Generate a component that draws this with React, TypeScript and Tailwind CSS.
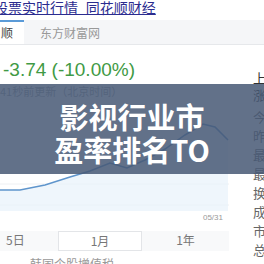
import * as React from 'react';

const chartPts: [number, number][] = [
  [0, 91], [20, 91], [45, 86], [70, 78], [90, 72], [110, 64], [127, 69],
  [145, 61], [165, 50], [185, 36], [203, 25], [215, 28], [228, 41],
];

const sideItems = ['今开', '昨收', '最高', '最低', '换手', '成交', '市值', '总市'];

function PriceChart() {
  const line = chartPts.map(([x, y], i) => `${i ? 'L' : 'M'}${x} ${y}`).join(' ');
  return (
    <svg width="229" height="112" viewBox="0 0 229 112" className="block">
      <line x1="0" y1="85" x2="229" y2="85" stroke="#eef0f3" strokeWidth="1" />
      <line x1="0" y1="106" x2="229" y2="106" stroke="#eef0f3" strokeWidth="1" />
      <path d={`${line} L228 112 L0 112 Z`} fill="#e8f2fb" opacity="0.7" />
      <path d={line} fill="none" stroke="#5f95cc" strokeWidth="1.5" />
    </svg>
  );
}

export default function App() {
  return (
    <div className="relative w-[264px] h-[264px] overflow-hidden bg-white font-['Noto_Sans_CJK_SC',sans-serif]">
      {/* page title link */}
      <div className="h-[20px] -ml-[6px] -mt-[2px] whitespace-nowrap text-[14px] leading-[18px] text-[#2b2c8f] underline">
        股票实时行情_同花顺财经
      </div>

      {/* source tabs */}
      <div className="mt-[2px] flex h-[25px] items-stretch border-b border-[#e6e8eb] bg-[#f5f6f8]">
        <div className="w-[24px] border-t-2 border-[#5b9bd8] bg-white pl-[1px] pt-[4px] text-[12px] leading-[14px] text-[#444]">顺</div>
        <div className="pl-[16px] pt-[6px] text-[12px] leading-[14px] text-[#999]">东方财富网</div>
      </div>

      <div className="flex">
        <div className="w-[248px]">
          <div className="mt-[13px] h-[23px] pl-[3px] font-['Liberation_Sans',sans-serif] text-[19px] leading-[23px] text-[#3f9a45]">
            -3.74 (-10.00%)
          </div>
          <div className="mt-[2px] h-[16px] whitespace-nowrap text-[11px] leading-[16px] text-[#a0a4aa]">41秒前更新（北京时间）</div>
          <PriceChart />
          <div className="flex h-[14px] w-[229px] justify-end pr-[6px] font-['Liberation_Sans',sans-serif] text-[8px] leading-[14px] text-[#999]">05/31</div>
          <div className="mt-[6px] flex h-[20px] w-[229px] items-stretch bg-[#f8f9fa] text-[12px] leading-[18px] text-[#777]">
            <div className="w-[58px] pl-[6px]">5日</div>
            <div className="flex w-[84px] justify-center border border-[#e3e5e8] bg-white">1月</div>
            <div className="flex flex-1 justify-center">1年</div>
          </div>
          <div className="mt-[5px] whitespace-nowrap pl-[30px] text-[12px] leading-[16px] text-[#999]">韩国个股增值税</div>
        </div>

        <div className="flex-1 overflow-hidden whitespace-nowrap pl-[5px] pt-[24px] text-[13px] text-[#666]">
          <div className="leading-[17px] text-[#333]">上证指数</div>
          <div className="leading-[17px] text-[#333]">涨跌</div>
          <div className="mt-[4px]">
            {sideItems.map(s => (
              <div key={s} className="leading-[19px]">{s}</div>
            ))}
          </div>
        </div>
      </div>

      {/* title overlay */}
      <div className="absolute left-0 top-[84px] flex h-[90px] w-full flex-col items-center justify-center bg-[rgba(70,88,116,0.85)] pt-[8px]">
        <div className="whitespace-nowrap text-[29px] font-bold leading-[33px] text-white">影视行业市</div>
        <div className="whitespace-nowrap text-[29px] font-bold leading-[33px] text-white">盈率排名TO</div>
      </div>
    </div>
  );
}
